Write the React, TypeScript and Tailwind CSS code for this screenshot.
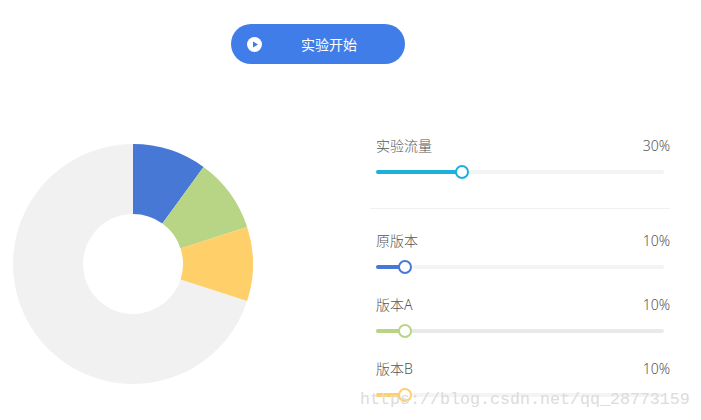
const font = '"Noto Sans", "Noto Sans CJK SC", sans-serif';

function polar(r: number, deg: number) {
  const a = ((deg - 90) * Math.PI) / 180;
  return `${120 + r * Math.cos(a)} ${120 + r * Math.sin(a)}`;
}

function slice(from: number, to: number) {
  const large = to - from > 180 ? 1 : 0;
  return `M${polar(120, from)} A120 120 0 ${large} 1 ${polar(120, to)} L${polar(50, to)} A50 50 0 ${large} 0 ${polar(50, from)} Z`;
}

function Donut() {
  return (
    <svg width="240" height="240" viewBox="0 0 240 240" className="shrink-0">
      <path d={slice(108, 360)} fill="#f1f1f1" />
      <path d={slice(0, 36)} fill="#4878d6" />
      <path d={slice(36, 72)} fill="#b7d585" />
      <path d={slice(72, 108)} fill="#ffcf69" />
    </svg>
  );
}

function Slider({
  label,
  value,
  fill,
  color,
  knob,
  track,
}: {
  label: string;
  value: string;
  fill: number;
  color: string;
  knob: string;
  track: string;
}) {
  return (
    <div>
      <div className="flex h-5 items-center justify-between text-[14px] leading-5 text-[#555555]">
        <span className="ml-1.5 font-light">{label}</span>
        <span className="font-light">{value}</span>
      </div>
      <div className={`relative ml-1.5 mt-3.5 h-1 w-[288px] rounded-full ${track}`}>
        <div className={`h-1 rounded-full ${color}`} style={{ width: fill }} />
        <div
          className={`absolute top-[-5px] h-3.5 w-3.5 rounded-full border-2 bg-white ${knob}`}
          style={{ left: fill - 7 }}
        />
      </div>
    </div>
  );
}

export default function App() {
  return (
    <div className="relative h-[420px] w-[701px] overflow-hidden bg-white" style={{ fontFamily: font }}>
      <div className="pt-6 pl-[231px]">
        <button className="flex h-10 w-[174px] items-center rounded-full bg-[#417de8] pl-4 text-[14px] text-white">
          <svg width="15" height="15" viewBox="0 0 15 15" className="shrink-0">
            <circle cx="7.5" cy="7.5" r="7.5" fill="#fff" />
            <path d="M6 4.4 L11 7.5 L6 10.6 Z" fill="#417de8" />
          </svg>
          <span className="ml-[39px]">实验开始</span>
        </button>
      </div>
      <div className="mt-[72px] flex items-start pl-[13px]">
        <div className="mt-2">
          <Donut />
        </div>
        <div className="ml-[117px] w-[300px]">
          <Slider label="实验流量" value="30%" fill={86} color="bg-[#1cb0dc]" knob="border-[#1cb0dc]" track="bg-[#f4f4f4]" />
          <div className="mt-[34px] h-px w-full bg-[#f1f1f1]" />
          <div className="mt-[22px] flex flex-col gap-[26px]">
            <Slider label="原版本" value="10%" fill={29} color="bg-[#4878d6]" knob="border-[#4878d6]" track="bg-[#f4f4f4]" />
            <Slider label="版本A" value="10%" fill={29} color="bg-[#b7d585]" knob="border-[#b7d585]" track="bg-[#e9e9e9]" />
            <Slider label="版本B" value="10%" fill={29} color="bg-[#ffcf69]" knob="border-[#ffcf69]" track="bg-[#f4f4f4]" />
          </div>
        </div>
      </div>
      <div
        className="absolute left-[360px] top-[390px] whitespace-nowrap text-[16.67px] leading-5 text-[#dcdcd8]"
        style={{ fontFamily: '"Liberation Mono", monospace' }}
      >
        https://blog.csdn.net/qq_28773159
      </div>
    </div>
  );
}
